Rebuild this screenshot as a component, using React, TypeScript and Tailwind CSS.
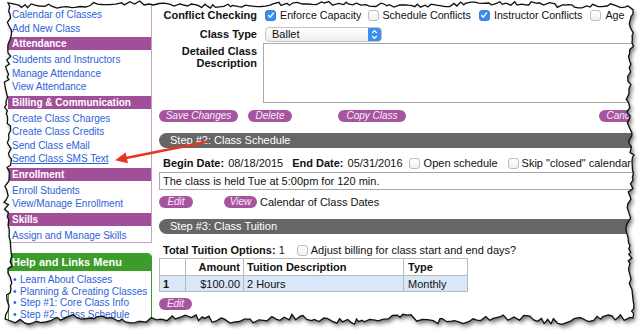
import React from "react";

const sidebar: { head?: string; links: string[] }[] = [
  { links: ["Calendar of Classes", "Add New Class"] },
  { head: "Attendance", links: ["Students and Instructors", "Manage Attendance", "View Attendance"] },
  {
    head: "Billing & Communication",
    links: ["Create Class Charges", "Create Class Credits", "Send Class eMail", "Send Class SMS Text"],
  },
  { head: "Enrollment", links: ["Enroll Students", "View/Manage Enrollment"] },
  { head: "Skills", links: ["Assign and Manage Skills"] },
];

const helpLinks = [
  "Learn About Classes",
  "Planning & Creating Classes",
  "Step #1: Core Class Info",
  "Step #2: Class Schedule",
  "Step #3: Class Tuition",
];

// ragged paper outline, seeded so it is the same every render
function paperPath() {
  let s = 4271;
  const r = () => {
    s = (s * 16807) % 2147483647;
    return s / 2147483647;
  };
  const pts: [number, number][] = [];
  for (let x = 8; x < 628; x += 2 + r() * 4) pts.push([x, 4.5 + Math.sin(x / 29) * 1.6 + (r() - 0.5) * 4.5]);
  for (let y = 6; y < 319; y += 2 + r() * 4) pts.push([630 + Math.sin(y / 21) * 2 + (r() - 0.5) * 5, y]);
  for (let x = 630; x > 9; x -= 2 + r() * 4) pts.push([x, 319.5 + Math.sin(x / 17) * 2.2 + (r() - 0.5) * 6]);
  for (let y = 319; y > 6; y -= 2 + r() * 4) pts.push([8 + Math.sin(y / 19) * 1.8 + (r() - 0.5) * 5, y]);
  return "M" + pts.map((p) => p[0].toFixed(1) + " " + p[1].toFixed(1)).join("L") + "Z";
}

const paper = paperPath();

function Box({ checked, className = "" }: { checked?: boolean; className?: string }) {
  return checked ? (
    <span
      className={`inline-flex h-[11px] w-[11px] shrink-0 items-center justify-center rounded-[3px] border border-[#2f7fe4] bg-[#3b8df2] ${className}`}
    >
      <svg width="8" height="8" viewBox="0 0 8 8">
        <path d="M1.3 4.2 3.2 6.1 6.8 1.6" fill="none" stroke="white" strokeWidth="1.4" />
      </svg>
    </span>
  ) : (
    <span
      className={`inline-block h-[11px] w-[11px] shrink-0 rounded-[3px] border border-[#bdbdbd] bg-gradient-to-b from-white to-[#f1f1f1] ${className}`}
    />
  );
}

function Pill({ label, w, className = "" }: { label: string; w: string; className?: string }) {
  return (
    <span
      className={`inline-block h-[12px] shrink-0 rounded-full bg-[#a654a0] text-center text-[10px] italic leading-[12px] text-[#f6edf5] ${w} ${className}`}
    >
      {label}
    </span>
  );
}

function StepBar({ label }: { label: string }) {
  return (
    <div className="h-[15px] w-[500px] rounded-l-[8px] bg-[#666666] pl-[11px] text-[11px] leading-[15px] text-white">
      {label}
    </div>
  );
}

export default function App() {
  return (
    <div className="relative h-[334px] w-[640px] overflow-hidden bg-white font-['Liberation_Sans',Arial,sans-serif] text-[#111]">
      <div className="flex">
        <aside className="ml-[8px] w-[144px] shrink-0 text-[10px]">
          <div className="border-r border-b border-[#c99fc5] pt-[8px]">
            {sidebar.map((group, gi) => (
              <div key={gi}>
                {group.head && (
                  <div className="mt-[2px] mb-[3px] h-[13px] bg-[#a14f98] pl-[4px] font-bold leading-[13px] text-white">
                    {group.head}
                  </div>
                )}
                {group.links.map((l) => (
                  <div
                    key={l}
                    className={`h-[13.5px] pl-[4px] leading-[13.5px] text-[#2d63d8] ${l === "Send Class SMS Text" ? "underline" : ""}`}
                  >
                    {l}
                  </div>
                ))}
              </div>
            ))}
          </div>
          <div className="mt-[10px] rounded-t-[4px] border border-[#3d9b2b]">
            <div className="h-[17px] rounded-t-[3px] bg-[#3d9b2b] pl-[3px] text-[11px] font-bold leading-[17px] text-white">
              Help and Links Menu
            </div>
            <div className="pt-[3px] leading-[11.7px]">
              {helpLinks.map((l) => (
                <div key={l} className="flex pl-[4px] text-[#2d63d8]">
                  <span className="w-[7px]">•</span>
                  <span>{l}</span>
                </div>
              ))}
            </div>
          </div>
        </aside>

        <main className="w-[488px] shrink-0 pl-[7px] text-[11px]">
          <div className="mt-[8px] flex h-[14px] items-center whitespace-nowrap">
            <div className="w-[98px] shrink-0 text-right font-bold">Conflict Checking</div>
            <Box checked className="ml-[8px]" />
            <span className="ml-[4px] text-[10.7px]">Enforce Capacity</span>
            <Box className="ml-[7px]" />
            <span className="ml-[3px] text-[10.7px]">Schedule Conflicts</span>
            <Box checked className="ml-[8px]" />
            <span className="ml-[4px] text-[10.7px]">Instructor Conflicts</span>
            <Box className="ml-[8px]" />
            <span className="ml-[4px] text-[10.7px]">Age</span>
          </div>

          <div className="mt-[5px] flex h-[15px] items-center">
            <div className="w-[98px] shrink-0 text-right font-bold">Class Type</div>
            <div className="ml-[8px] flex h-[15px] w-[117px] overflow-hidden rounded-[4px] border border-[#c4c4c4] bg-gradient-to-b from-white to-[#ededed]">
              <span className="flex-1 pl-[6px] leading-[13px]">Ballet</span>
              <span className="flex w-[13px] items-center justify-center bg-[#3b8df2]">
                <svg width="7" height="11" viewBox="0 0 7 11">
                  <path d="M1.2 4 3.5 1.6 5.8 4M1.2 7 3.5 9.4 5.8 7" fill="none" stroke="white" strokeWidth="1.2" />
                </svg>
              </span>
            </div>
          </div>

          <div className="mt-[1px] flex">
            <div className="w-[98px] shrink-0 pt-[2px] text-right font-bold leading-[12px]">
              Detailed Class
              <br />
              Description
            </div>
            <div className="ml-[6px] h-[60px] w-[400px] border border-[#a9a9a9]" />
          </div>

          <div className="mt-[7px] flex">
            <Pill label="Save Changes" w="w-[79px]" />
            <Pill label="Delete" w="w-[44px]" className="ml-[10px]" />
            <Pill label="Copy Class" w="w-[68px]" className="ml-[46px]" />
            <Pill label="Cancel" w="w-[46px]" className="ml-[193px]" />
          </div>

          <div className="mt-[11px]">
            <StepBar label="Step #2: Class Schedule" />
          </div>

          <div className="mt-[8px] flex h-[14px] items-center whitespace-nowrap pl-[4px]">
            <b>Begin Date:</b>
            <span className="ml-[4px]">08/18/2015</span>
            <b className="ml-[9px]">End Date:</b>
            <span className="ml-[4px]">05/31/2016</span>
            <Box className="ml-[6px]" />
            <span className="ml-[4px]">Open schedule</span>
            <Box className="ml-[10px]" />
            <span className="ml-[3px]">Skip "closed" calendar days</span>
          </div>

          <div className="mt-[2px] h-[18px] w-[500px] border border-[#a9a9a9] pl-[3px] leading-[16px]">
            The class is held Tue at 5:00pm for 120 min.
          </div>

          <div className="mt-[6px] flex h-[12px] items-center leading-[12px]">
            <Pill label="Edit" w="w-[34px]" />
            <Pill label="View" w="w-[33px]" className="ml-[31px]" />
            <span className="ml-[3px]">Calendar of Class Dates</span>
          </div>

          <div className="mt-[11px]">
            <StepBar label="Step #3: Class Tuition" />
          </div>

          <div className="mt-[9px] flex h-[14px] items-center whitespace-nowrap pl-[4px]">
            <b>Total Tuition Options:</b>
            <span className="ml-[3px]">1</span>
            <Box className="ml-[12px]" />
            <span className="ml-[3px]">Adjust billing for class start and end days?</span>
          </div>

          <table className="mt-[1px] border-collapse text-[11px] leading-[14px]">
            <tbody>
              <tr className="h-[17px]">
                <th className="w-[26px] border border-[#b9b9b9]" />
                <th className="w-[58px] border border-[#b9b9b9] pr-[3px] text-right">Amount</th>
                <th className="w-[160px] border border-[#b9b9b9] pl-[3px] text-left">Tuition Description</th>
                <th className="w-[64px] border border-[#b9b9b9] pl-[4px] text-left">Type</th>
              </tr>
              <tr className="h-[16px] bg-[#d9e7f8]">
                <td className="border border-[#b9b9b9] pl-[3px] font-bold">1</td>
                <td className="border border-[#b9b9b9] pr-[3px] text-right">$100.00</td>
                <td className="border border-[#b9b9b9] pl-[3px]">2 Hours</td>
                <td className="border border-[#b9b9b9] pl-[4px]">Monthly</td>
              </tr>
            </tbody>
          </table>

          <div className="mt-[6px] flex">
            <Pill label="Edit" w="w-[33px]" />
          </div>
        </main>
      </div>

      {/* callout arrow */}
      <svg className="pointer-events-none absolute inset-0" width="640" height="334">
        <line x1="206" y1="142" x2="126" y2="158" stroke="#e8351f" strokeWidth="2.6" />
        <polygon points="115,160.3 128,163.2 125.6,152.6" fill="#e8351f" />
      </svg>

      {/* torn paper edge */}
      <svg className="pointer-events-none absolute inset-0" width="640" height="334">
        <defs>
          <clipPath id="outside">
            <path clipRule="evenodd" d={`M0 0H640V334H0Z ${paper}`} />
          </clipPath>
          <filter id="soft" x="-10%" y="-10%" width="120%" height="120%">
            <feGaussianBlur stdDeviation="2" />
          </filter>
        </defs>
        <path d={`M0 0H640V334H0Z ${paper}`} fill="white" fillRule="evenodd" />
        <g clipPath="url(#outside)">
          <path d={paper} transform="translate(2 3)" fill="#000" opacity="0.55" filter="url(#soft)" />
        </g>
        <path d={paper} fill="none" stroke="#111" strokeWidth="1.3" strokeLinejoin="miter" />
      </svg>
    </div>
  );
}
